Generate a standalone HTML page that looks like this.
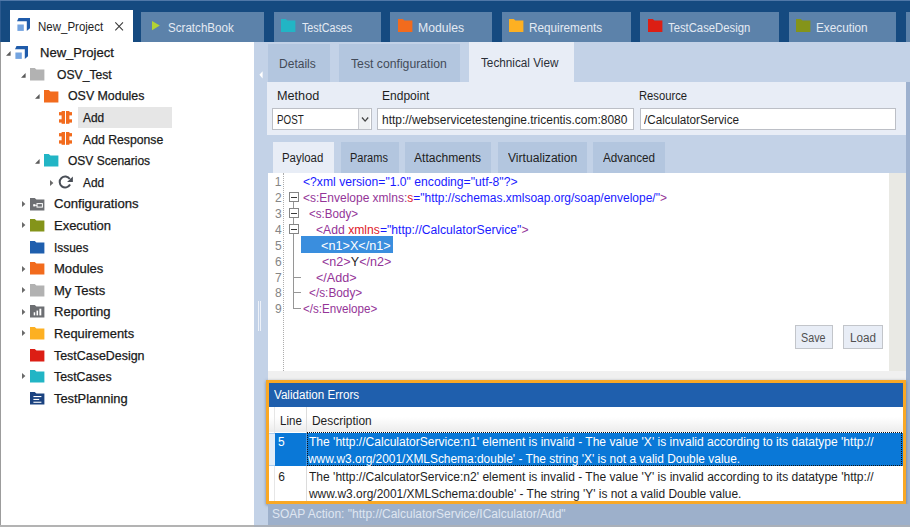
<!DOCTYPE html><html><head><meta charset="utf-8"><title>Tosca</title><style>

html,body{margin:0;padding:0;}
body{width:910px;height:527px;overflow:hidden;position:relative;background:#fff;font-family:"Liberation Sans", sans-serif;}
.b{position:absolute;}
.t{position:absolute;white-space:pre;height:20px;line-height:20px;transform-origin:0 0;}
svg{position:absolute;overflow:visible;}

</style></head><body>
<div class="b" style="left:0.00px;top:0.00px;width:910.00px;height:527.00px;background:#ffffff;"></div>
<div class="b" style="left:0.00px;top:0.00px;width:910.00px;height:42.00px;background:#154a80;"></div>
<div class="b" style="left:0.00px;top:0.00px;width:910.00px;height:1.10px;background:#5078a8;"></div>
<div class="b" style="left:0.00px;top:1.00px;width:1.00px;height:41.00px;background:#2c5a8f;"></div>
<div class="b" style="left:9.80px;top:10.00px;width:123.40px;height:32.50px;background:#ffffff;"></div>
<div class="b" style="left:141.30px;top:11.80px;width:122.80px;height:30.20px;background:#5c82aa;"></div>
<div class="b" style="left:273.50px;top:11.80px;width:107.90px;height:30.20px;background:#5c82aa;"></div>
<div class="b" style="left:390.30px;top:11.80px;width:101.90px;height:30.20px;background:#5c82aa;"></div>
<div class="b" style="left:501.70px;top:11.80px;width:128.90px;height:30.20px;background:#5c82aa;"></div>
<div class="b" style="left:640.00px;top:11.80px;width:139.00px;height:30.20px;background:#5c82aa;"></div>
<div class="b" style="left:788.80px;top:11.80px;width:107.20px;height:30.20px;background:#5c82aa;"></div>
<div class="b" style="left:905.50px;top:11.80px;width:4.50px;height:30.20px;background:#5c82aa;"></div>
<svg style="left:115.20px;top:22.00px" width="8.30" height="8.60" viewBox="0 0 8.30 8.60"><path d="M0.3 0.3 L8 8.3 M8 0.3 L0.3 8.3" stroke="#3a3a3a" stroke-width="1.05" fill="none"/></svg>
<div class="b" style="left:0.00px;top:42.00px;width:254.20px;height:485.00px;background:#ffffff;"></div>
<div class="b" style="left:0.00px;top:42.00px;width:1.20px;height:485.00px;background:#9c9c9c;"></div>
<div class="b" style="left:78.20px;top:107.00px;width:93.80px;height:21.00px;background:#e6e6e6;"></div>
<div class="b" style="left:254.20px;top:42.00px;width:13.80px;height:485.00px;background:#c3d2e7;"></div>
<div class="b" style="left:260.00px;top:42.00px;width:650.00px;height:485.00px;background:#c3d2e7;"></div>
<div class="b" style="left:268.00px;top:43.50px;width:61.50px;height:38.50px;background:#b3c6df;"></div>
<div class="b" style="left:338.80px;top:43.50px;width:121.00px;height:38.50px;background:#b3c6df;"></div>
<div class="b" style="left:468.60px;top:42.00px;width:105.20px;height:40.00px;background:#e8edf6;"></div>
<div class="b" style="left:267.20px;top:81.80px;width:639.10px;height:53.50px;background:#e8edf6;"></div>
<div class="b" style="left:906.00px;top:81.80px;width:4.00px;height:445.20px;background:#9db1cf;"></div>
<div class="b" style="left:272.00px;top:108.20px;width:99.50px;height:21.40px;background:#ffffff;border:1px solid #bcbfc6;box-sizing:border-box;"></div>
<div class="b" style="left:357.60px;top:109.20px;width:12.90px;height:19.40px;background:#eef0f2;border-left:1px solid #c8cad0;box-sizing:border-box;"></div>
<div class="b" style="left:377.20px;top:108.20px;width:256.60px;height:21.40px;background:#ffffff;border:1px solid #bcbfc6;box-sizing:border-box;"></div>
<div class="b" style="left:639.50px;top:108.20px;width:256.80px;height:21.40px;background:#ffffff;border:1px solid #bcbfc6;box-sizing:border-box;"></div>
<svg style="left:361.20px;top:115.00px" width="8.00" height="8.00" viewBox="0 0 8.00 8.00"><path d="M1 2.5 L4.1 6.1 L7.2 2.5" fill="none" stroke="#444" stroke-width="1.3"/></svg>
<svg style="left:258.00px;top:70.00px" width="6.00" height="10.00" viewBox="0 0 6.00 10.00"><path d="M4.6 1.2 L1.4 4.8 L4.6 8.4 Z" fill="#ffffff"/></svg>
<div class="b" style="left:258.00px;top:301.00px;width:1.20px;height:29.50px;background:#eef2f9;"></div>
<div class="b" style="left:260.00px;top:301.00px;width:1.00px;height:29.50px;background:#eef2f9;"></div>
<div class="b" style="left:273.00px;top:141.50px;width:61.30px;height:31.10px;background:#e8edf6;"></div>
<div class="b" style="left:341.00px;top:141.50px;width:57.60px;height:31.10px;background:#b3c6df;"></div>
<div class="b" style="left:404.50px;top:141.50px;width:86.80px;height:31.10px;background:#b3c6df;"></div>
<div class="b" style="left:497.50px;top:141.50px;width:89.30px;height:31.10px;background:#b3c6df;"></div>
<div class="b" style="left:593.00px;top:141.50px;width:72.00px;height:31.10px;background:#b3c6df;"></div>
<div class="b" style="left:267.50px;top:172.50px;width:621.50px;height:198.10px;background:#ffffff;"></div>
<div class="b" style="left:889.00px;top:172.50px;width:17.00px;height:198.10px;background:#e9e9e4;"></div>
<div class="b" style="left:267.50px;top:370.60px;width:638.50px;height:10.00px;background:#f0f0f0;"></div>
<div class="b" style="left:283.20px;top:172.50px;width:1.00px;height:198.10px;background:transparent;border-left:1px dotted #adadad;"></div>
<div class="b" style="left:301.40px;top:236.30px;width:91.20px;height:16.30px;background:#3a8ede;"></div>
<div class="b" style="left:293.20px;top:201.00px;width:1.00px;height:108.00px;background:#969696;"></div>
<div class="b" style="left:293.20px;top:276.50px;width:8.20px;height:1.00px;background:#969696;"></div>
<div class="b" style="left:293.20px;top:292.40px;width:8.20px;height:1.00px;background:#969696;"></div>
<div class="b" style="left:293.20px;top:308.20px;width:8.20px;height:1.00px;background:#969696;"></div>
<div class="b" style="left:288.60px;top:192.00px;width:10.00px;height:10.00px;background:#ffffff;border:1.1px solid #858585;box-sizing:border-box;"></div>
<div class="b" style="left:290.80px;top:196.50px;width:5.80px;height:1.00px;background:#3a3a3a;"></div>
<div class="b" style="left:288.60px;top:208.00px;width:10.00px;height:10.00px;background:#ffffff;border:1.1px solid #858585;box-sizing:border-box;"></div>
<div class="b" style="left:290.80px;top:212.50px;width:5.80px;height:1.00px;background:#3a3a3a;"></div>
<div class="b" style="left:288.60px;top:224.00px;width:10.00px;height:10.00px;background:#ffffff;border:1.1px solid #858585;box-sizing:border-box;"></div>
<div class="b" style="left:290.80px;top:228.50px;width:5.80px;height:1.00px;background:#3a3a3a;"></div>
<div class="b" style="left:794.70px;top:325.00px;width:38.60px;height:24.20px;background:#e8edf6;border:1px solid #c2c5ca;box-sizing:border-box;"></div>
<div class="b" style="left:843.20px;top:325.00px;width:40.00px;height:24.20px;background:#e8edf6;border:1px solid #c2c5ca;box-sizing:border-box;"></div>
<div class="b" style="left:266.10px;top:380.30px;width:640.20px;height:124.00px;background:#f9a825;box-shadow:0 1px 3px rgba(60,70,90,.55);"></div>
<div class="b" style="left:269.20px;top:383.30px;width:633.60px;height:117.70px;background:#ffffff;"></div>
<div class="b" style="left:269.20px;top:383.30px;width:633.60px;height:23.80px;background:#1f5fad;"></div>
<div class="b" style="left:269.20px;top:407.10px;width:633.60px;height:25.40px;background:#fff;background:linear-gradient(#ffffff 40%,#ececec);"></div>
<div class="b" style="left:274.40px;top:407.10px;width:0.80px;height:93.90px;background:#e6e6e6;"></div>
<div class="b" style="left:306.30px;top:407.10px;width:0.90px;height:93.90px;background:#dcdcdc;"></div>
<div class="b" style="left:269.20px;top:432.50px;width:633.60px;height:33.50px;background:#0a78d7;"></div>
<div class="b" style="left:269.20px;top:432.50px;width:5.60px;height:33.50px;background:#e2edf8;border-top:1px solid #a9cdf0;border-bottom:1px solid #a9cdf0;box-sizing:border-box;"></div>
<div class="b" style="left:306.20px;top:432.50px;width:1.20px;height:33.50px;background:#4a98e0;"></div>
<div class="b" style="left:307.30px;top:432.40px;width:595.10px;height:33.80px;background:transparent;border:1px dotted #111;box-sizing:border-box;"></div>
<div class="b" style="left:267.50px;top:504.30px;width:642.50px;height:22.70px;background:#9db0cb;"></div>
<div class="b" style="left:0.00px;top:524.80px;width:910.00px;height:2.20px;background:#aab0b9;"></div>
<div class="b" style="left:0.00px;top:524.80px;width:254.20px;height:2.20px;background:#b3b3b3;"></div>
<svg style="left:17.30px;top:18.00px" width="13.00" height="13.00" viewBox="0 0 13.00 13.00"><path d="M1.5 0 H13 V10.2 L9.8 13 V3.3 H0 Z" fill="#1f5baa"/><rect x="0.4" y="6.5" width="6.4" height="6.4" fill="#74a4e0"/></svg>
<svg style="left:15.00px;top:46.10px" width="13.00" height="13.00" viewBox="0 0 13.00 13.00"><path d="M1.5 0 H13 V10.2 L9.8 13 V3.3 H0 Z" fill="#1f5baa"/><rect x="0.4" y="6.5" width="6.4" height="6.4" fill="#74a4e0"/></svg>
<svg style="left:152.00px;top:21.00px" width="8.00" height="9.20" viewBox="0 0 8.00 9.20"><path d="M0 0 L7.8 4.6 L0 9.2 Z" fill="#b4d233"/></svg>
<svg style="left:280.80px;top:18.90px" width="14.40" height="12.90" viewBox="0 0 14.40 12.90"><path d="M0 0 H4.75 L6.48 1.4 H14.40 V12.90 H0 Z" fill="#22b5c5"/></svg>
<svg style="left:397.60px;top:18.90px" width="14.40" height="12.90" viewBox="0 0 14.40 12.90"><path d="M0 0 H4.75 L6.48 1.4 H14.40 V12.90 H0 Z" fill="#f26b1d"/></svg>
<svg style="left:508.80px;top:18.90px" width="14.40" height="12.90" viewBox="0 0 14.40 12.90"><path d="M0 0 H4.75 L6.48 1.4 H14.40 V12.90 H0 Z" fill="#fdb022"/></svg>
<svg style="left:647.60px;top:18.90px" width="14.40" height="12.90" viewBox="0 0 14.40 12.90"><path d="M0 0 H4.75 L6.48 1.4 H14.40 V12.90 H0 Z" fill="#dc1e14"/></svg>
<svg style="left:796.00px;top:18.90px" width="14.40" height="12.90" viewBox="0 0 14.40 12.90"><path d="M0 0 H4.75 L6.48 1.4 H14.40 V12.90 H0 Z" fill="#84941a"/></svg>
<svg style="left:29.90px;top:68.10px" width="14.40" height="12.60" viewBox="0 0 14.40 12.60"><path d="M0 0 H4.75 L6.48 1.4 H14.40 V12.60 H0 Z" fill="#b2b2b2"/></svg>
<svg style="left:44.20px;top:89.67px" width="14.40" height="12.60" viewBox="0 0 14.40 12.60"><path d="M0 0 H4.75 L6.48 1.4 H14.40 V12.60 H0 Z" fill="#f26b1d"/></svg>
<svg style="left:44.20px;top:154.38px" width="14.40" height="12.60" viewBox="0 0 14.40 12.60"><path d="M0 0 H4.75 L6.48 1.4 H14.40 V12.60 H0 Z" fill="#22b5c5"/></svg>
<svg style="left:29.90px;top:197.52px" width="14.40" height="12.60" viewBox="0 0 14.40 12.60"><path d="M0 0 H4.75 L6.48 1.4 H14.40 V12.60 H0 Z" fill="#6d6f73"/><rect x="3.2" y="6.2" width="2.2" height="2.2" fill="#fff"/><rect x="5.2" y="6.9" width="2" height="0.9" fill="#fff"/><rect x="7" y="5.6" width="5.4" height="3.5" fill="none" stroke="#fff" stroke-width="1"/></svg>
<svg style="left:29.90px;top:219.09px" width="14.40" height="12.60" viewBox="0 0 14.40 12.60"><path d="M0 0 H4.75 L6.48 1.4 H14.40 V12.60 H0 Z" fill="#84941a"/></svg>
<svg style="left:29.90px;top:240.66px" width="14.40" height="12.60" viewBox="0 0 14.40 12.60"><path d="M0 0 H4.75 L6.48 1.4 H14.40 V12.60 H0 Z" fill="#1f5fae"/></svg>
<svg style="left:29.90px;top:262.23px" width="14.40" height="12.60" viewBox="0 0 14.40 12.60"><path d="M0 0 H4.75 L6.48 1.4 H14.40 V12.60 H0 Z" fill="#f26b1d"/></svg>
<svg style="left:29.90px;top:283.80px" width="14.40" height="12.60" viewBox="0 0 14.40 12.60"><path d="M0 0 H4.75 L6.48 1.4 H14.40 V12.60 H0 Z" fill="#b2b2b2"/></svg>
<svg style="left:29.90px;top:305.37px" width="14.40" height="12.60" viewBox="0 0 14.40 12.60"><path d="M0 0 H4.75 L6.48 1.4 H14.40 V12.60 H0 Z" fill="#6d6f73"/><rect x="3.7" y="7.3" width="1.5" height="3.1" fill="#fff"/><rect x="6.5" y="5.6" width="1.6" height="4.8" fill="#fff"/><rect x="9.4" y="3.7" width="1.9" height="6.7" fill="#fff"/></svg>
<svg style="left:29.90px;top:326.94px" width="14.40" height="12.60" viewBox="0 0 14.40 12.60"><path d="M0 0 H4.75 L6.48 1.4 H14.40 V12.60 H0 Z" fill="#fdb022"/></svg>
<svg style="left:29.90px;top:348.51px" width="14.40" height="12.60" viewBox="0 0 14.40 12.60"><path d="M0 0 H4.75 L6.48 1.4 H14.40 V12.60 H0 Z" fill="#dc1e14"/></svg>
<svg style="left:29.90px;top:370.08px" width="14.40" height="12.60" viewBox="0 0 14.40 12.60"><path d="M0 0 H4.75 L6.48 1.4 H14.40 V12.60 H0 Z" fill="#22b5c5"/></svg>
<svg style="left:29.90px;top:391.65px" width="14.40" height="12.60" viewBox="0 0 14.40 12.60"><path d="M0 0 H4.75 L6.48 1.4 H14.40 V12.60 H0 Z" fill="#1b4380"/><rect x="3.4" y="4.0" width="8" height="1.1" fill="#fff"/><rect x="3.4" y="6.9" width="5.8" height="1.1" fill="#fff"/><rect x="3.4" y="9.7" width="8" height="1.1" fill="#fff"/></svg>
<svg style="left:59.00px;top:110.80px" width="13.00" height="12.80" viewBox="0 0 13.00 12.80"><g fill="#f26b1d"><rect x="2.6" y="0" width="3.4" height="12.8"/><rect x="0" y="1.1" width="3" height="3.3"/><rect x="0" y="8.3" width="3" height="3.3"/><rect x="7" y="0" width="3.4" height="12.8"/><rect x="10" y="1.1" width="3" height="3.3"/><rect x="10" y="8.3" width="3" height="3.3"/></g></svg>
<svg style="left:59.00px;top:132.40px" width="13.00" height="12.80" viewBox="0 0 13.00 12.80"><g fill="#f26b1d"><rect x="2.6" y="0" width="3.4" height="12.8"/><rect x="0" y="1.1" width="3" height="3.3"/><rect x="0" y="8.3" width="3" height="3.3"/><rect x="7" y="0" width="3.4" height="12.8"/><rect x="10" y="1.1" width="3" height="3.3"/><rect x="10" y="8.3" width="3" height="3.3"/></g></svg>
<svg style="left:58.00px;top:175.00px" width="16.00" height="14.00" viewBox="0 0 16.00 14.00"><path d="M11.81 4.00 A5.5 5.5 0 1 0 12.06 9.58" fill="none" stroke="#4a4f57" stroke-width="2"/><path d="M14.9 1.4 V6.9 H9.1 Z" fill="#4a4f57"/></svg>
<svg style="left:6.30px;top:51.00px" width="4.60" height="4.80" viewBox="0 0 4.60 4.80"><path d="M4.6 0 V4.8 H0 Z" fill="#5a5a5a"/></svg>
<svg style="left:21.00px;top:72.60px" width="4.60" height="4.80" viewBox="0 0 4.60 4.80"><path d="M4.6 0 V4.8 H0 Z" fill="#5a5a5a"/></svg>
<svg style="left:35.20px;top:94.20px" width="4.60" height="4.80" viewBox="0 0 4.60 4.80"><path d="M4.6 0 V4.8 H0 Z" fill="#5a5a5a"/></svg>
<svg style="left:35.20px;top:159.00px" width="4.60" height="4.80" viewBox="0 0 4.60 4.80"><path d="M4.6 0 V4.8 H0 Z" fill="#5a5a5a"/></svg>
<svg style="left:50.20px;top:179.60px" width="3.60" height="6.00" viewBox="0 0 3.60 6.00"><path d="M0 0 L3.4 3 L0 6 Z" fill="#6a6a6a"/></svg>
<svg style="left:21.50px;top:200.82px" width="3.60" height="6.00" viewBox="0 0 3.60 6.00"><path d="M0 0 L3.4 3 L0 6 Z" fill="#6a6a6a"/></svg>
<svg style="left:21.50px;top:222.39px" width="3.60" height="6.00" viewBox="0 0 3.60 6.00"><path d="M0 0 L3.4 3 L0 6 Z" fill="#6a6a6a"/></svg>
<svg style="left:21.50px;top:265.53px" width="3.60" height="6.00" viewBox="0 0 3.60 6.00"><path d="M0 0 L3.4 3 L0 6 Z" fill="#6a6a6a"/></svg>
<svg style="left:21.50px;top:287.10px" width="3.60" height="6.00" viewBox="0 0 3.60 6.00"><path d="M0 0 L3.4 3 L0 6 Z" fill="#6a6a6a"/></svg>
<svg style="left:21.50px;top:308.67px" width="3.60" height="6.00" viewBox="0 0 3.60 6.00"><path d="M0 0 L3.4 3 L0 6 Z" fill="#6a6a6a"/></svg>
<svg style="left:21.50px;top:330.24px" width="3.60" height="6.00" viewBox="0 0 3.60 6.00"><path d="M0 0 L3.4 3 L0 6 Z" fill="#6a6a6a"/></svg>
<svg style="left:21.50px;top:373.38px" width="3.60" height="6.00" viewBox="0 0 3.60 6.00"><path d="M0 0 L3.4 3 L0 6 Z" fill="#6a6a6a"/></svg>
<div class="t" style="left:37.65px;top:17.00px;font-size:12px;color:#1e1e1e;transform:scaleX(0.9579);">New_Project</div>
<div class="t" style="left:168.07px;top:18.00px;font-size:12px;color:#e4eaf3;transform:scaleX(0.9675);">ScratchBook</div>
<div class="t" style="left:301.77px;top:18.00px;font-size:12px;color:#e4eaf3;transform:scaleX(0.8949);">TestCases</div>
<div class="t" style="left:417.67px;top:18.00px;font-size:12px;color:#e4eaf3;transform:scaleX(1.0171);">Modules</div>
<div class="t" style="left:528.95px;top:18.00px;font-size:12px;color:#e4eaf3;transform:scaleX(0.9783);">Requirements</div>
<div class="t" style="left:668.16px;top:18.00px;font-size:12px;color:#e4eaf3;transform:scaleX(0.9408);">TestCaseDesign</div>
<div class="t" style="left:816.15px;top:18.00px;font-size:12px;color:#e4eaf3;transform:scaleX(0.9800);">Execution</div>
<div class="t" style="left:39.92px;top:43.00px;font-size:12.4px;color:#1a1a1a;transform:scaleX(1.0515);-webkit-text-stroke:0.25px #1a1a1a;">New_Project</div>
<div class="t" style="left:56.64px;top:65.00px;font-size:12.4px;color:#1a1a1a;transform:scaleX(0.9807);-webkit-text-stroke:0.25px #1a1a1a;">OSV_Test</div>
<div class="t" style="left:68.44px;top:86.00px;font-size:12.4px;color:#1a1a1a;transform:scaleX(0.9986);-webkit-text-stroke:0.25px #1a1a1a;">OSV Modules</div>
<div class="t" style="left:82.63px;top:108.00px;font-size:12.4px;color:#1a1a1a;transform:scaleX(0.9551);-webkit-text-stroke:0.25px #1a1a1a;">Add</div>
<div class="t" style="left:82.68px;top:130.00px;font-size:12.4px;color:#1a1a1a;transform:scaleX(0.9872);-webkit-text-stroke:0.25px #1a1a1a;">Add Response</div>
<div class="t" style="left:68.45px;top:151.00px;font-size:12.4px;color:#1a1a1a;transform:scaleX(0.9695);-webkit-text-stroke:0.25px #1a1a1a;">OSV Scenarios</div>
<div class="t" style="left:82.63px;top:173.00px;font-size:12.4px;color:#1a1a1a;transform:scaleX(0.9553);-webkit-text-stroke:0.25px #1a1a1a;">Add</div>
<div class="t" style="left:53.85px;top:194.00px;font-size:12.4px;color:#1a1a1a;transform:scaleX(1.0582);-webkit-text-stroke:0.25px #1a1a1a;">Configurations</div>
<div class="t" style="left:54.32px;top:216.00px;font-size:12.4px;color:#1a1a1a;transform:scaleX(1.0470);-webkit-text-stroke:0.25px #1a1a1a;">Execution</div>
<div class="t" style="left:53.60px;top:238.00px;font-size:12.4px;color:#1a1a1a;transform:scaleX(0.9599);-webkit-text-stroke:0.25px #1a1a1a;">Issues</div>
<div class="t" style="left:53.77px;top:259.00px;font-size:12.4px;color:#1a1a1a;transform:scaleX(1.0534);-webkit-text-stroke:0.25px #1a1a1a;">Modules</div>
<div class="t" style="left:54.32px;top:281.00px;font-size:12.4px;color:#1a1a1a;transform:scaleX(1.0514);-webkit-text-stroke:0.25px #1a1a1a;">My Tests</div>
<div class="t" style="left:53.76px;top:302.00px;font-size:12.4px;color:#1a1a1a;transform:scaleX(1.0540);-webkit-text-stroke:0.25px #1a1a1a;">Reporting</div>
<div class="t" style="left:54.34px;top:324.00px;font-size:12.4px;color:#1a1a1a;transform:scaleX(1.0384);-webkit-text-stroke:0.25px #1a1a1a;">Requirements</div>
<div class="t" style="left:54.02px;top:346.00px;font-size:12.4px;color:#1a1a1a;transform:scaleX(1.0029);-webkit-text-stroke:0.25px #1a1a1a;">TestCaseDesign</div>
<div class="t" style="left:54.03px;top:367.00px;font-size:12.4px;color:#1a1a1a;transform:scaleX(0.9948);-webkit-text-stroke:0.25px #1a1a1a;">TestCases</div>
<div class="t" style="left:54.01px;top:389.00px;font-size:12.4px;color:#1a1a1a;transform:scaleX(1.0378);-webkit-text-stroke:0.25px #1a1a1a;">TestPlanning</div>
<div class="t" style="left:279.15px;top:54.00px;font-size:12px;color:#434b58;transform:scaleX(1.0024);">Details</div>
<div class="t" style="left:350.74px;top:54.00px;font-size:12px;color:#434b58;transform:scaleX(1.0178);">Test configuration</div>
<div class="t" style="left:480.75px;top:53.00px;font-size:12px;color:#2a2f38;transform:scaleX(0.9782);">Technical View</div>
<div class="t" style="left:276.93px;top:86.00px;font-size:12px;color:#1e1e1e;transform:scaleX(1.0555);">Method</div>
<div class="t" style="left:382.12px;top:86.00px;font-size:12px;color:#1e1e1e;transform:scaleX(1.0015);">Endpoint</div>
<div class="t" style="left:639.32px;top:86.00px;font-size:12px;color:#1e1e1e;transform:scaleX(0.9367);">Resource</div>
<div class="t" style="left:277.20px;top:110.00px;font-size:12px;color:#1e1e1e;transform:scaleX(0.8171);">POST</div>
<div class="t" style="left:382.20px;top:110.00px;font-size:12px;color:#1e1e1e;transform:scaleX(0.9969);">http://webservicetestengine.tricentis.com:8080</div>
<div class="t" style="left:644.00px;top:110.00px;font-size:12px;color:#1e1e1e;transform:scaleX(0.9757);">/CalculatorService</div>
<div class="t" style="left:282.27px;top:148.00px;font-size:12px;color:#1e1e1e;transform:scaleX(0.9524);">Payload</div>
<div class="t" style="left:350.42px;top:148.00px;font-size:12px;color:#1e1e1e;transform:scaleX(0.9165);">Params</div>
<div class="t" style="left:414.00px;top:148.00px;font-size:12px;color:#1e1e1e;transform:scaleX(1.0055);">Attachments</div>
<div class="t" style="left:507.95px;top:148.00px;font-size:12px;color:#1e1e1e;transform:scaleX(1.0098);">Virtualization</div>
<div class="t" style="left:603.00px;top:148.00px;font-size:12px;color:#1e1e1e;transform:scaleX(0.9748);">Advanced</div>
<div class="t" style="left:274.87px;top:172.00px;font-size:12px;color:#858585;transform:scaleX(1.0000);">1</div>
<div class="t" style="left:275.04px;top:188.00px;font-size:12px;color:#858585;transform:scaleX(1.0000);">2</div>
<div class="t" style="left:275.02px;top:204.00px;font-size:12px;color:#858585;transform:scaleX(1.0000);">3</div>
<div class="t" style="left:274.93px;top:220.00px;font-size:12px;color:#858585;transform:scaleX(1.0000);">4</div>
<div class="t" style="left:275.01px;top:236.00px;font-size:12px;color:#858585;transform:scaleX(1.0000);">5</div>
<div class="t" style="left:275.04px;top:252.00px;font-size:12px;color:#858585;transform:scaleX(1.0000);">6</div>
<div class="t" style="left:275.02px;top:268.00px;font-size:12px;color:#858585;transform:scaleX(1.0000);">7</div>
<div class="t" style="left:274.99px;top:283.00px;font-size:12px;color:#858585;transform:scaleX(1.0000);">8</div>
<div class="t" style="left:275.09px;top:299.00px;font-size:12px;color:#858585;transform:scaleX(1.0000);">9</div>
<div class="t" style="left:302.67px;top:172.00px;font-size:12px;color:#1a1aff;transform:scaleX(1.0126);"><span style="color:#1a1aff">&lt;?xml version="1.0" encoding="utf-8"?&gt;</span></div>
<div class="t" style="left:302.62px;top:188.00px;font-size:12px;color:#943498;transform:scaleX(0.9987);"><span style="color:#943498">&lt;s:Envelope xmlns:</span><span style="color:#e0202a">s</span><span style="color:#1a1aff">="http://schemas.xmlsoap.org/soap/envelope/"</span><span style="color:#943498">&gt;</span></div>
<div class="t" style="left:308.79px;top:204.00px;font-size:12px;color:#943498;transform:scaleX(0.9689);"><span style="color:#943498">&lt;s:Body&gt;</span></div>
<div class="t" style="left:315.53px;top:220.00px;font-size:12px;color:#943498;transform:scaleX(1.0137);"><span style="color:#943498">&lt;Add </span><span style="color:#e0202a">xmlns</span><span style="color:#1a1aff">="http://CalculatorService"</span><span style="color:#943498">&gt;</span></div>
<div class="t" style="left:321.20px;top:236.00px;font-size:12px;color:#fff;transform:scaleX(1.0557);"><span style="color:#ffffff">&lt;n1&gt;X&lt;/n1&gt;</span></div>
<div class="t" style="left:321.53px;top:252.00px;font-size:12px;color:#943498;transform:scaleX(1.0494);"><span style="color:#943498">&lt;n2&gt;</span><span style="color:#1e1e1e">Y</span><span style="color:#943498">&lt;/n2&gt;</span></div>
<div class="t" style="left:315.64px;top:268.00px;font-size:12px;color:#943498;transform:scaleX(1.0505);"><span style="color:#943498">&lt;/Add&gt;</span></div>
<div class="t" style="left:308.77px;top:283.00px;font-size:12px;color:#943498;transform:scaleX(0.9857);"><span style="color:#943498">&lt;/s:Body&gt;</span></div>
<div class="t" style="left:302.78px;top:299.00px;font-size:12px;color:#943498;transform:scaleX(0.9683);"><span style="color:#943498">&lt;/s:Envelope&gt;</span></div>
<div class="t" style="left:801.32px;top:328.00px;font-size:12px;color:#505050;transform:scaleX(0.8955);">Save</div>
<div class="t" style="left:850.27px;top:328.00px;font-size:12px;color:#505050;transform:scaleX(0.9726);">Load</div>
<div class="t" style="left:273.95px;top:385.00px;font-size:12px;color:#ffffff;transform:scaleX(0.9694);">Validation Errors</div>
<div class="t" style="left:280.31px;top:411.00px;font-size:12px;color:#1e1e1e;transform:scaleX(0.9623);">Line</div>
<div class="t" style="left:311.56px;top:411.00px;font-size:12px;color:#1e1e1e;transform:scaleX(0.9940);">Description</div>
<div class="t" style="left:277.98px;top:432.00px;font-size:12px;color:#ffffff;transform:scaleX(1.0000);">5</div>
<div class="t" style="left:278.32px;top:467.00px;font-size:12px;color:#1e1e1e;transform:scaleX(1.0000);">6</div>
<div class="t" style="left:308.75px;top:432.00px;font-size:12px;color:#ffffff;transform:scaleX(1.0041);">The 'http://CalculatorService:n1' element is invalid - The value 'X' is invalid according to its datatype 'http://</div>
<div class="t" style="left:308.33px;top:449.00px;font-size:12px;color:#ffffff;transform:scaleX(0.9936);">www.w3.org/2001/XMLSchema:double' - The string 'X' is not a valid Double value.</div>
<div class="t" style="left:308.75px;top:467.00px;font-size:12px;color:#1e1e1e;transform:scaleX(1.0043);">The 'http://CalculatorService:n2' element is invalid - The value 'Y' is invalid according to its datatype 'http://</div>
<div class="t" style="left:308.81px;top:484.00px;font-size:12px;color:#1e1e1e;transform:scaleX(0.9943);">www.w3.org/2001/XMLSchema:double' - The string 'Y' is not a valid Double value.</div>
<div class="t" style="left:272.46px;top:504.00px;font-size:12px;color:#dfe6f1;transform:scaleX(0.9995);">SOAP Action: "http://CalculatorService/ICalculator/Add"</div>
</body></html>
